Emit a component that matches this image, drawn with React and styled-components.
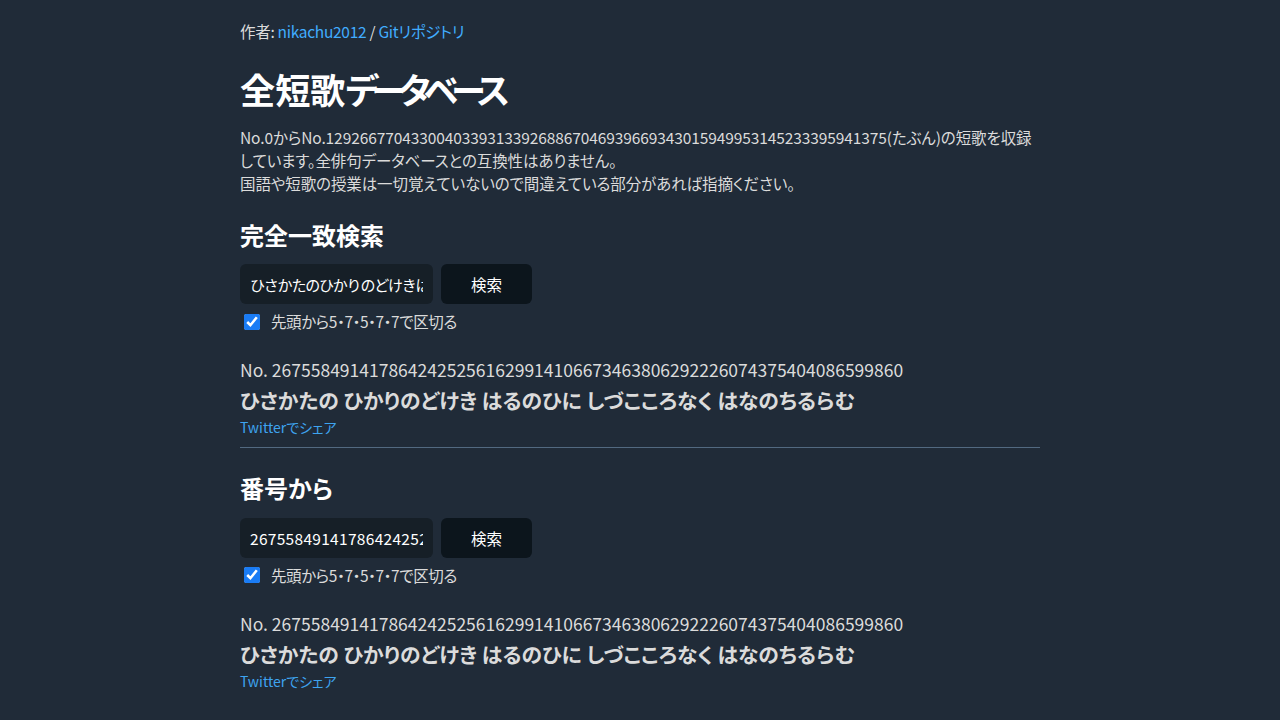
import styled, { createGlobalStyle } from 'styled-components'

const GlobalStyle = createGlobalStyle`
  html {
    background: #202b38;
  }
  body {
    margin: 20px auto;
    padding: 0 10px;
    max-width: 800px;
    background: #202b38;
    color: #dbdbdb;
    font-family: 'Noto Sans CJK JP', 'Noto Sans', sans-serif;
    font-size: 15.5px;
    line-height: 1.4;
    font-feature-settings: 'palt';
  }
`

const Page = styled.main`
  display: flex;
  flex-direction: column;
`

const Byline = styled.p`
  margin: 0;
  line-height: 22.4px;
  letter-spacing: -0.3px;
`

const Link = styled.a`
  color: #41adff;
  text-decoration: none;
`

const Title = styled.h1`
  margin: 22px 0 12px;
  font-size: 35.2px;
  line-height: 1.4;
  font-weight: 700;
  color: #fff;
`

const Kana = styled.span`
  letter-spacing: -7px;
`

const Intro = styled.p`
  margin: 0;
  line-height: 23px;
  letter-spacing: -0.1px;
`

const SectionTitle = styled.h2`
  margin: 23px 0 13px;
  font-size: 24px;
  line-height: 1.4;
  font-weight: 700;
  color: #fff;
`

const SearchRow = styled.div`
  display: flex;
  gap: 8px;
  height: 40px;
`

const TextInput = styled.input`
  box-sizing: border-box;
  width: 193px;
  height: 40px;
  padding: 10px;
  border: none;
  border-radius: 6px;
  background: #161f27;
  color: #fff;
  font-family: inherit;
  font-size: ${(p) => (p.$kana ? '15px' : '15.5px')};
  letter-spacing: ${(p) => (p.$kana ? '-1.2px' : '0.3px')};
  outline: none;
`

const Button = styled.button`
  box-sizing: border-box;
  width: 91px;
  height: 40px;
  padding: 0;
  border: none;
  border-radius: 6px;
  background: #0c151c;
  color: #fff;
  font-family: inherit;
  font-size: 15.5px;
  cursor: pointer;
`

const CheckLabel = styled.label`
  display: flex;
  align-items: center;
  margin-top: 6px;
  height: 23px;
  gap: 11px;
  letter-spacing: -0.4px;
`

const Check = styled.input`
  width: 16px;
  height: 16px;
  margin: 0 0 0 4px;
  accent-color: #1a7cf5;
`

const Result = styled.div`
  display: flex;
  flex-direction: column;
  align-items: flex-start;
  margin-top: 25px;
`

const Number = styled.div`
  font-size: 17.5px;
  line-height: 23px;
`

const Poem = styled.div`
  margin-top: 5px;
  font-size: 20.8px;
  line-height: 29px;
  font-weight: 700;
`

const Share = styled(Link)`
  margin-top: 2px;
  font-size: 14px;
  line-height: 20px;
  color: #3ea4f0;
`

const Divider = styled.hr`
  width: 100%;
  margin: 10px 0 0;
  border: none;
  border-top: 1px solid #526980;
`

const NO = '26755849141786424252561629914106673463806292226074375404086599860'
const POEM = 'ひさかたの ひかりのどけき はるのひに しづこころなく はなのちるらむ'

function SearchSection({ title, value, kana }) {
  return (
    <section>
      <SectionTitle>{title}</SectionTitle>
      <SearchRow>
        <TextInput value={value} readOnly $kana={kana} />
        <Button>検索</Button>
      </SearchRow>
      <CheckLabel>
        <Check type="checkbox" checked readOnly />
        先頭から5・7・5・7・7で区切る
      </CheckLabel>
      <Result>
        <Number>No. {NO}</Number>
        <Poem>{POEM}</Poem>
        <Share href="#">Twitterでシェア</Share>
      </Result>
    </section>
  )
}

export default function App() {
  return (
    <>
      <GlobalStyle />
      <Page>
        <Byline>
          作者: <Link href="#">nikachu2012</Link> / <Link href="#">Gitリポジトリ</Link>
        </Byline>
        <Title>
          全短歌<Kana>データベース</Kana>
        </Title>
        <Intro>
          No.0からNo.129266770433004033931339268867046939669343015949953145233395941375(たぶん)の短歌を収録しています。全俳句データベースとの互換性はありません。
          <br />
          国語や短歌の授業は一切覚えていないので間違えている部分があれば指摘ください。
        </Intro>
        <SearchSection title="完全一致検索" value="ひさかたのひかりのどけきはる" kana />
        <Divider />
        <SearchSection title="番号から" value={NO} />
      </Page>
    </>
  )
}
